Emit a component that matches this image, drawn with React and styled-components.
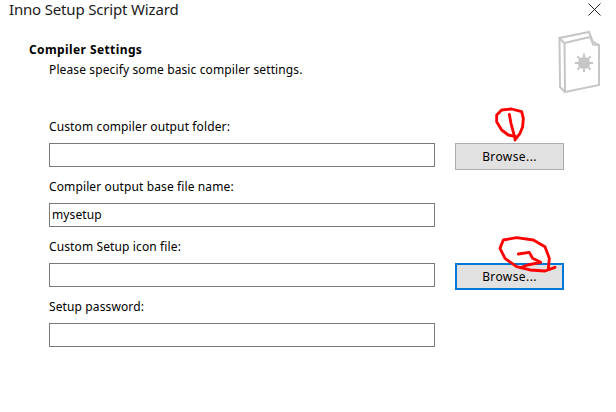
import React from "react";
import styled, { createGlobalStyle } from "styled-components";

const GlobalStyle = createGlobalStyle`
  html, body {
    margin: 0;
    padding: 0;
    background: #fff;
  }
`;

const Dialog = styled.div`
  position: relative;
  width: 616px;
  height: 412px;
  overflow: hidden;
  background: #fff;
  color: #000;
  font-family: "Noto Sans", "Open Sans", sans-serif;
  font-size: 12px;
  letter-spacing: 0.12px;
`;

const TitleBar = styled.div`
  display: flex;
  justify-content: space-between;
  align-items: center;
  height: 19px;
  padding: 0 15px 0 9px;
`;

const Title = styled.div`
  font-size: 15px;
  letter-spacing: -0.17px;
  line-height: 19px;
  color: #1a1a1a;
`;

const Header = styled.div`
  padding: 23px 0 0 29px;
  height: 66px;
  box-sizing: border-box;
`;

const Heading = styled.div`
  font-weight: 700;
  font-size: 12px;
  letter-spacing: 0.4px;
  line-height: 16px;
`;

const SubHeading = styled.div`
  margin: 4px 0 0 20px;
  line-height: 16px;
`;

const Form = styled.div`
  display: flex;
  flex-direction: column;
  padding: 33px 0 0 49px;
`;

const Field = styled.div`
  height: 60px;
`;

const Label = styled.div`
  position: relative;
  top: 1px;
  line-height: 16px;
  height: 16px;
  margin-bottom: 9px;
`;

const Row = styled.div`
  display: flex;
  align-items: flex-start;
  gap: 20px;
`;

const TextBox = styled.div`
  width: 386px;
  height: 24px;
  box-sizing: border-box;
  border: 1px solid #7a7a7a;
  padding: 0 2px;
  line-height: 22px;
`;

const Button = styled.div`
  width: 109px;
  height: 27px;
  box-sizing: border-box;
  display: flex;
  align-items: center;
  justify-content: center;
  background: #e1e1e1;
  letter-spacing: 0.4px;
  border: ${(props) => (props.$focused ? "2px solid #0078d7" : "1px solid #adadad")};
`;

const Scribbles = styled.svg`
  position: absolute;
  left: 0;
  top: 0;
  pointer-events: none;
`;

const PageIcon = styled.svg`
  position: absolute;
  left: 556px;
  top: 30px;
`;

const CloseIcon = () => (
  <svg width="13" height="13" viewBox="0 0 13 13">
    <path d="M0.5 0.5L12.5 12.5M12.5 0.5L0.5 12.5" stroke="#222" strokeWidth="1" fill="none" />
  </svg>
);

export default function App() {
  return (
    <Dialog>
      <GlobalStyle />
      <TitleBar>
        <Title>Inno Setup Script Wizard</Title>
        <CloseIcon />
      </TitleBar>
      <Header>
        <Heading>Compiler Settings</Heading>
        <SubHeading>Please specify some basic compiler settings.</SubHeading>
      </Header>
      <Form>
        <Field>
          <Label>Custom compiler output folder:</Label>
          <Row>
            <TextBox />
            <Button>Browse...</Button>
          </Row>
        </Field>
        <Field>
          <Label>Compiler output base file name:</Label>
          <Row>
            <TextBox>mysetup</TextBox>
          </Row>
        </Field>
        <Field>
          <Label>Custom Setup icon file:</Label>
          <Row>
            <TextBox />
            <Button $focused>Browse...</Button>
          </Row>
        </Field>
        <Field>
          <Label>Setup password:</Label>
          <Row>
            <TextBox />
          </Row>
        </Field>
      </Form>

      <PageIcon width="46" height="66" viewBox="0 0 46 66" fill="none" stroke="#c6c6c6" strokeWidth="2">
        <path d="M8 13L3.5 8L33 2L37 12M3.5 8L4 57L9 62" />
        <path d="M8.5 13L34 7M37 12L43 15V55L9 62L8.5 13" />
        <path d="M34 7L37 15L43 15" strokeWidth="1.5" />
        <path d="M28 23.5V42M19 33H37M21.5 26.5L34.5 39.5M34.5 26.5L21.5 39.5" strokeWidth="2" />
        <circle cx="28" cy="33" r="6" fill="#c6c6c6" stroke="none" />
      </PageIcon>

      <Scribbles width="616" height="412" viewBox="0 0 616 412" fill="none" stroke="#f00" strokeLinecap="round" strokeLinejoin="round">
        <g transform="translate(430 95) scale(0.3333)" strokeWidth="8.5">
          <path d="M255 135L270 115L278 95L280 70L275 50L245 42L215 45L200 60L200 80L215 105L235 120L258 125" />
          <path d="M238 58L243 85L255 130" />
        </g>
        <g transform="translate(430 225) scale(0.3333)" strokeWidth="8.5">
          <path d="M355 130L358 100L345 65L310 45L260 38L220 45L210 70L225 100L260 125L300 135L345 138L375 127" />
          <path d="M265 87L298 82L308 100L332 112L292 120L272 128" />
        </g>
      </Scribbles>
    </Dialog>
  );
}
